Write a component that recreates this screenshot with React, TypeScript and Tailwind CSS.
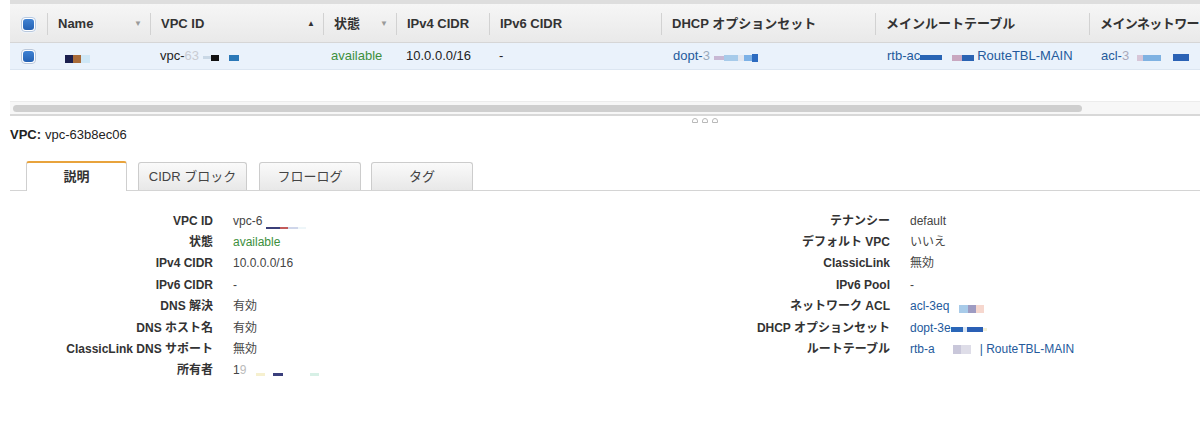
import React from "react";

function Checkbox() {
  return (
    <div className="w-[15px] h-[15px] rounded-[4px] bg-white border border-[#b9c8dc] flex items-center justify-center shadow-[0_0_0_1px_#eef3f9]">
      <div className="w-[11px] h-[11px] rounded-[3px] bg-gradient-to-b from-[#3f82d3] to-[#2461b3]" />
    </div>
  );
}

function Divider() {
  return <div className="w-px h-[22px] bg-[#d2d2d2] shrink-0" />;
}

function DropArrow() {
  return <span className="text-[8px] text-[#9a9a9a] leading-none">▼</span>;
}

function Blk({ c, w, h = 7, mt = 0 }: { c: string; w: number; h?: number; mt?: number }) {
  return <span className="inline-block align-middle" style={{ background: c, width: w, height: h, marginTop: mt }} />;
}

function HeaderCell({
  w,
  label,
  arrow,
}: {
  w: string;
  label: string;
  arrow?: React.ReactNode;
}) {
  return (
    <div className={`${w} h-full flex items-center shrink-0`}>
      <Divider />
      <div className="flex-1 flex items-center justify-between pl-[10px] pr-[8px] whitespace-nowrap overflow-hidden">
        <span>{label}</span>
        {arrow}
      </div>
    </div>
  );
}

const labelL = [
  "VPC ID",
  "状態",
  "IPv4 CIDR",
  "IPv6 CIDR",
  "DNS 解決",
  "DNS ホスト名",
  "ClassicLink DNS サポート",
  "所有者",
];

const labelR = [
  "テナンシー",
  "デフォルト VPC",
  "ClassicLink",
  "IPv6 Pool",
  "ネットワーク ACL",
  "DHCP オプションセット",
  "ルートテーブル",
];

export default function App() {
  const link = "text-[#245a9c]";
  const valuesL: React.ReactNode[] = [
    <span className="flex items-center">
      vpc-6
      <span className="ml-[4px] flex items-end h-[10px] mt-[6px]">
        <Blk c="#3b3f78" w={14} h={2} />
        <Blk c="#c25a5a" w={8} h={2} />
        <Blk c="#cfd6ea" w={10} h={2} />
        <Blk c="#eef6f9" w={8} h={2} />
      </span>
    </span>,
    <span className="text-[#3d8f3d]">available</span>,
    "10.0.0.0/16",
    "-",
    "有効",
    "有効",
    "無効",
    <span className="flex items-center">
      1<span className="text-[#bbb]">9</span>
      <span className="ml-[10px] mt-[8px] flex items-center">
        <Blk c="#f6f0cf" w={9} h={3} />
        <span className="w-[8px]" />
        <Blk c="#3a3f7c" w={10} h={3} />
        <span className="w-[27px]" />
        <Blk c="#d7f0e6" w={9} h={3} />
      </span>
    </span>,
  ];
  const valuesR: React.ReactNode[] = [
    "default",
    "いいえ",
    "無効",
    "-",
    <span className={`${link} flex items-center`}>
      acl-3eq
      <span className="ml-[10px] mt-[6px] flex items-center">
        <Blk c="#a8cbe9" w={9} h={8} />
        <Blk c="#9e9bc2" w={8} h={8} />
        <Blk c="#f6d7ce" w={8} h={8} />
      </span>
    </span>,
    <span className={`${link} flex items-center`}>
      dopt-3e
      <span className="flex items-center mt-[3px]">
        <Blk c="#2a66b8" w={12} h={5} />
        <Blk c="#dbe6f3" w={4} h={5} />
        <Blk c="#2a5fb5" w={16} h={5} />
        <Blk c="#f3f0d8" w={4} h={3} />
      </span>
    </span>,
    <span className={`${link} flex items-center`}>
      rtb-a
      <span className="ml-[18px] flex items-center">
        <Blk c="#c9c7da" w={8} h={9} />
        <Blk c="#dedde8" w={10} h={9} />
      </span>
      <span className="ml-[9px]">| RouteTBL-MAIN</span>
    </span>,
  ];

  return (
    <div className="w-[1200px] h-[435px] bg-white overflow-hidden text-[#333] font-['Liberation_Sans','Noto_Sans_CJK_JP',sans-serif]">
      {/* grid */}
      <div className="ml-[10px]">
        <div className="h-[4px] bg-[#dedede]" />
        {/* header */}
        <div className="h-[39px] flex items-center bg-gradient-to-b from-[#f6f6f6] to-[#e9e9e9] border-b border-[#d6d6d6] text-[13px] font-bold text-[#333] pt-[2px]">
          <div className="w-[37px] h-full flex items-center justify-center shrink-0 pr-[1px]">
            <Checkbox />
          </div>
          <HeaderCell w="w-[103px]" label="Name" arrow={<DropArrow />} />
          <HeaderCell
            w="w-[173px]"
            label="VPC ID"
            arrow={<span className="text-[8px] text-[#333] leading-none">▲</span>}
          />
          <HeaderCell w="w-[73px]" label="状態" arrow={<DropArrow />} />
          <HeaderCell w="w-[93px]" label="IPv4 CIDR" />
          <HeaderCell w="w-[172px]" label="IPv6 CIDR" />
          <HeaderCell w="w-[214px]" label="DHCP オプションセット" />
          <HeaderCell w="w-[214px]" label="メインルートテーブル" />
          <div className="flex-1 h-full flex items-center">
            <Divider />
            <span className="pl-[10px] whitespace-nowrap tracking-[-0.6px]">メインネットワー</span>
          </div>
        </div>
        {/* row */}
        <div className="h-[27px] flex items-center bg-[#eaf2fb] border-b border-[#dce6f1] text-[13px] text-[#222] whitespace-nowrap">
          <div className="w-[37px] flex items-center justify-center shrink-0 pr-[1px]">
            <Checkbox />
          </div>
          <div className="w-[103px] shrink-0 pl-[18px] flex flex-col justify-center">
            <span className="flex items-center mt-[6px]">
              <Blk c="#1b1f4e" w={8} h={8} />
              <Blk c="#a96b38" w={8} h={8} />
              <Blk c="#cfe7f6" w={9} h={8} />
            </span>
          </div>
          <div className="w-[173px] shrink-0 pl-[10px] flex items-center">
            vpc-<span className="text-[#c9ccd2]">63</span>
            <span className="ml-[4px] mt-[3px] flex items-center">
              <Blk c="#c9d8e6" w={8} h={3} />
              <Blk c="#111" w={8} h={6} />
              <span className="w-[10px]" />
              <Blk c="#2b78b7" w={10} h={6} />
            </span>
          </div>
          <div className="w-[73px] shrink-0 pl-[8px] text-[#3d8f3d]">available</div>
          <div className="w-[93px] shrink-0 pl-[10px]">10.0.0.0/16</div>
          <div className="w-[172px] shrink-0 pl-[10px]">-</div>
          <div className={`w-[214px] shrink-0 pl-[12px] ${link} flex items-center`}>
            dopt-<span className="text-[#9ab]">3</span>
            <span className="ml-[4px] mt-[3px] flex items-center">
              <Blk c="#c8b8d4" w={10} h={4} />
              <Blk c="#a7cbea" w={14} h={6} />
              <Blk c="#e2e6ef" w={6} h={6} />
              <Blk c="#7cb1e6" w={8} h={6} />
              <Blk c="#2c6bc0" w={6} h={8} />
            </span>
          </div>
          <div className={`w-[214px] shrink-0 pl-[12px] ${link} flex items-center`}>
            rtb-ac
            <span className="mt-[3px] flex items-center">
              <Blk c="#2864b4" w={22} h={5} />
              <span className="w-[10px]" />
              <Blk c="#c8a7c0" w={10} h={6} />
              <Blk c="#2a63b3" w={12} h={6} />
            </span>
            <span className="ml-[3px]">RouteTBL-MAIN</span>
          </div>
          <div className={`flex-1 pl-[12px] ${link} flex items-center overflow-hidden`}>
            acl-<span className="text-[#aab]">3</span>
            <span className="ml-[8px] mt-[3px] flex items-center">
              <Blk c="#d7c6d8" w={6} h={6} />
              <Blk c="#7fb2e2" w={18} h={6} />
              <span className="w-[12px]" />
              <Blk c="#2b62b5" w={16} h={7} />
            </span>
          </div>
        </div>
        <div className="h-[31px]" />
        {/* scrollbar */}
        <div className="h-[15px] bg-[#f7f7f7] border-t border-[#ececec] border-b-2 border-b-[#d8d8d8] pt-[3px]">
          <div className="ml-[3px] w-[1069px] h-[7px] rounded-full bg-[#cfcfcf]" />
        </div>
      </div>
      {/* splitter dots */}
      <div className="h-[9px] flex items-center gap-[4px] pl-[692px]">
        <span className="w-[6px] h-[5px] rounded-t-full border border-[#b8b8b8]" />
        <span className="w-[6px] h-[5px] rounded-t-full border border-[#b8b8b8]" />
        <span className="w-[6px] h-[5px] rounded-t-full border border-[#b8b8b8]" />
      </div>
      {/* title */}
      <div className="h-[20px] ml-[10px] flex items-center text-[13px] text-[#222]">
        <span className="font-bold">VPC:</span>
        <span className="ml-[4px]">vpc-63b8ec06</span>
      </div>
      {/* tabs */}
      <div className="mt-[16px] ml-[10px] h-[30px] flex items-end border-b border-[#d4d4d4] text-[13px]">
        <div className="ml-[16px] w-[101px] h-[30px] -mb-px bg-white border-t-2 border-t-[#e8a33c] border-x border-x-[#cfcfcf] rounded-t-[3px] flex items-center justify-center font-bold text-[#333]">
          説明
        </div>
        <div className="ml-[11px] w-[109px] h-[28px] bg-gradient-to-b from-[#fafafa] to-[#e8e8e8] border border-[#cccccc] border-b-0 rounded-t-[3px] flex items-center justify-center text-[#444]">
          CIDR ブロック
        </div>
        <div className="ml-[12px] w-[102px] h-[28px] bg-gradient-to-b from-[#fafafa] to-[#e8e8e8] border border-[#cccccc] border-b-0 rounded-t-[3px] flex items-center justify-center text-[#444]">
          フローログ
        </div>
        <div className="ml-[10px] w-[102px] h-[28px] bg-gradient-to-b from-[#fafafa] to-[#e8e8e8] border border-[#cccccc] border-b-0 rounded-t-[3px] flex items-center justify-center text-[#444]">
          タグ
        </div>
      </div>
      {/* details */}
      <div className="pt-[19px] ml-[10px] flex text-[12px] whitespace-nowrap">
        <div className="w-[600px] grid grid-cols-[203px_1fr] auto-rows-[21.4px] gap-x-[20px] items-center">
          {labelL.map((l, i) => (
            <React.Fragment key={l}>
              <div className="text-right font-bold text-[#333]">{l}</div>
              <div className="text-[#444] flex items-center">{valuesL[i]}</div>
            </React.Fragment>
          ))}
        </div>
        <div className="flex-1 grid grid-cols-[280px_1fr] auto-rows-[21.4px] gap-x-[20px] items-center">
          {labelR.map((l, i) => (
            <React.Fragment key={l}>
              <div className="text-right font-bold text-[#333]">{l}</div>
              <div className="text-[#444] flex items-center">{valuesR[i]}</div>
            </React.Fragment>
          ))}
        </div>
      </div>
    </div>
  );
}
